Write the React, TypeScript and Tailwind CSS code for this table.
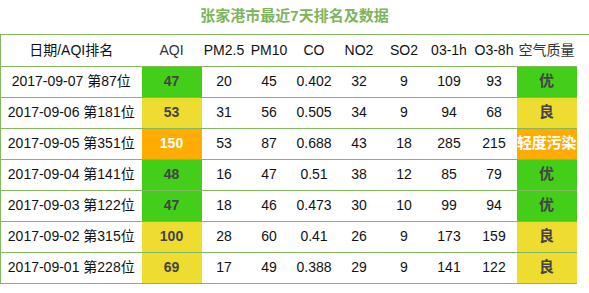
import React from "react";

type Row = {
  date: string;
  rank: string;
  aqi: string;
  vals: string[];
  q: string;
  level: "good" | "moderate" | "light";
};

const rows: Row[] = [
  { date: "2017-09-07", rank: "第87位", aqi: "47", vals: ["20", "45", "0.402", "32", "9", "109", "93"], q: "优", level: "good" },
  { date: "2017-09-06", rank: "第181位", aqi: "53", vals: ["31", "56", "0.505", "34", "9", "94", "68"], q: "良", level: "moderate" },
  { date: "2017-09-05", rank: "第351位", aqi: "150", vals: ["53", "87", "0.688", "43", "18", "285", "215"], q: "轻度污染", level: "light" },
  { date: "2017-09-04", rank: "第141位", aqi: "48", vals: ["16", "47", "0.51", "38", "12", "85", "79"], q: "优", level: "good" },
  { date: "2017-09-03", rank: "第122位", aqi: "47", vals: ["18", "46", "0.473", "30", "10", "99", "94"], q: "优", level: "good" },
  { date: "2017-09-02", rank: "第315位", aqi: "100", vals: ["28", "60", "0.41", "26", "9", "173", "159"], q: "良", level: "moderate" },
  { date: "2017-09-01", rank: "第228位", aqi: "69", vals: ["17", "49", "0.388", "29", "9", "141", "122"], q: "良", level: "moderate" },
];

const levelClass: Record<Row["level"], string> = {
  good: "bg-[#43ce1a] text-[#444]",
  moderate: "bg-[#eedc30] text-[#444]",
  light: "bg-[#ffab00] text-white",
};

const headers = ["PM2.5", "PM10", "CO", "NO2", "SO2", "03-1h", "O3-8h"];

export default function App() {
  return (
    <div
      className="w-[589px] h-[293px] bg-white text-[14px] text-[#111]"
      style={{ fontFamily: '"Liberation Sans", Arial, "Noto Sans CJK SC", sans-serif' }}
    >
      <div className="h-[34px] flex items-center justify-center pb-[2px] text-[15px] font-bold text-[#7db55c]">
        张家港市最近7天排名及数据
      </div>
      <div className="border-t border-[#83b95e]">
        <table className="w-[576px] table-fixed border-collapse border-l border-[#83b95e]">
          <colgroup>
            <col className="w-[141px]" />
            <col className="w-[60px]" />
            {headers.map((h) => (
              <col key={h} className="w-[45px]" />
            ))}
            <col className="w-[60px]" />
          </colgroup>
          <thead>
            <tr className="h-[31px] border-b border-[#83b95e]">
              <th className="font-normal text-center p-0 text-[#111]">日期/AQI排名</th>
              <th className="font-normal text-center p-0 text-[#333]">AQI</th>
              {headers.map((h) => (
                <th key={h} className="font-normal text-center p-0 whitespace-nowrap text-[#111]">
                  {h}
                </th>
              ))}
              <th className="font-normal text-center p-0 whitespace-nowrap text-[#333]">空气质量</th>
            </tr>
          </thead>
          <tbody>
            {rows.map((r) => (
              <tr key={r.date} className="h-[31px] border-b border-[#83b95e]">
                <td className="text-center p-0 whitespace-nowrap">
                  {r.date} {r.rank}
                </td>
                <td className={`text-center p-0 font-bold ${levelClass[r.level]}`}>{r.aqi}</td>
                {r.vals.map((v, i) => (
                  <td key={i} className="text-center p-0 whitespace-nowrap">
                    {v}
                  </td>
                ))}
                <td className={`text-center p-0 font-bold text-[15px] whitespace-nowrap tracking-[-0.2px] ${levelClass[r.level]}`}>
                  {r.q}
                </td>
              </tr>
            ))}
          </tbody>
        </table>
      </div>
    </div>
  );
}
